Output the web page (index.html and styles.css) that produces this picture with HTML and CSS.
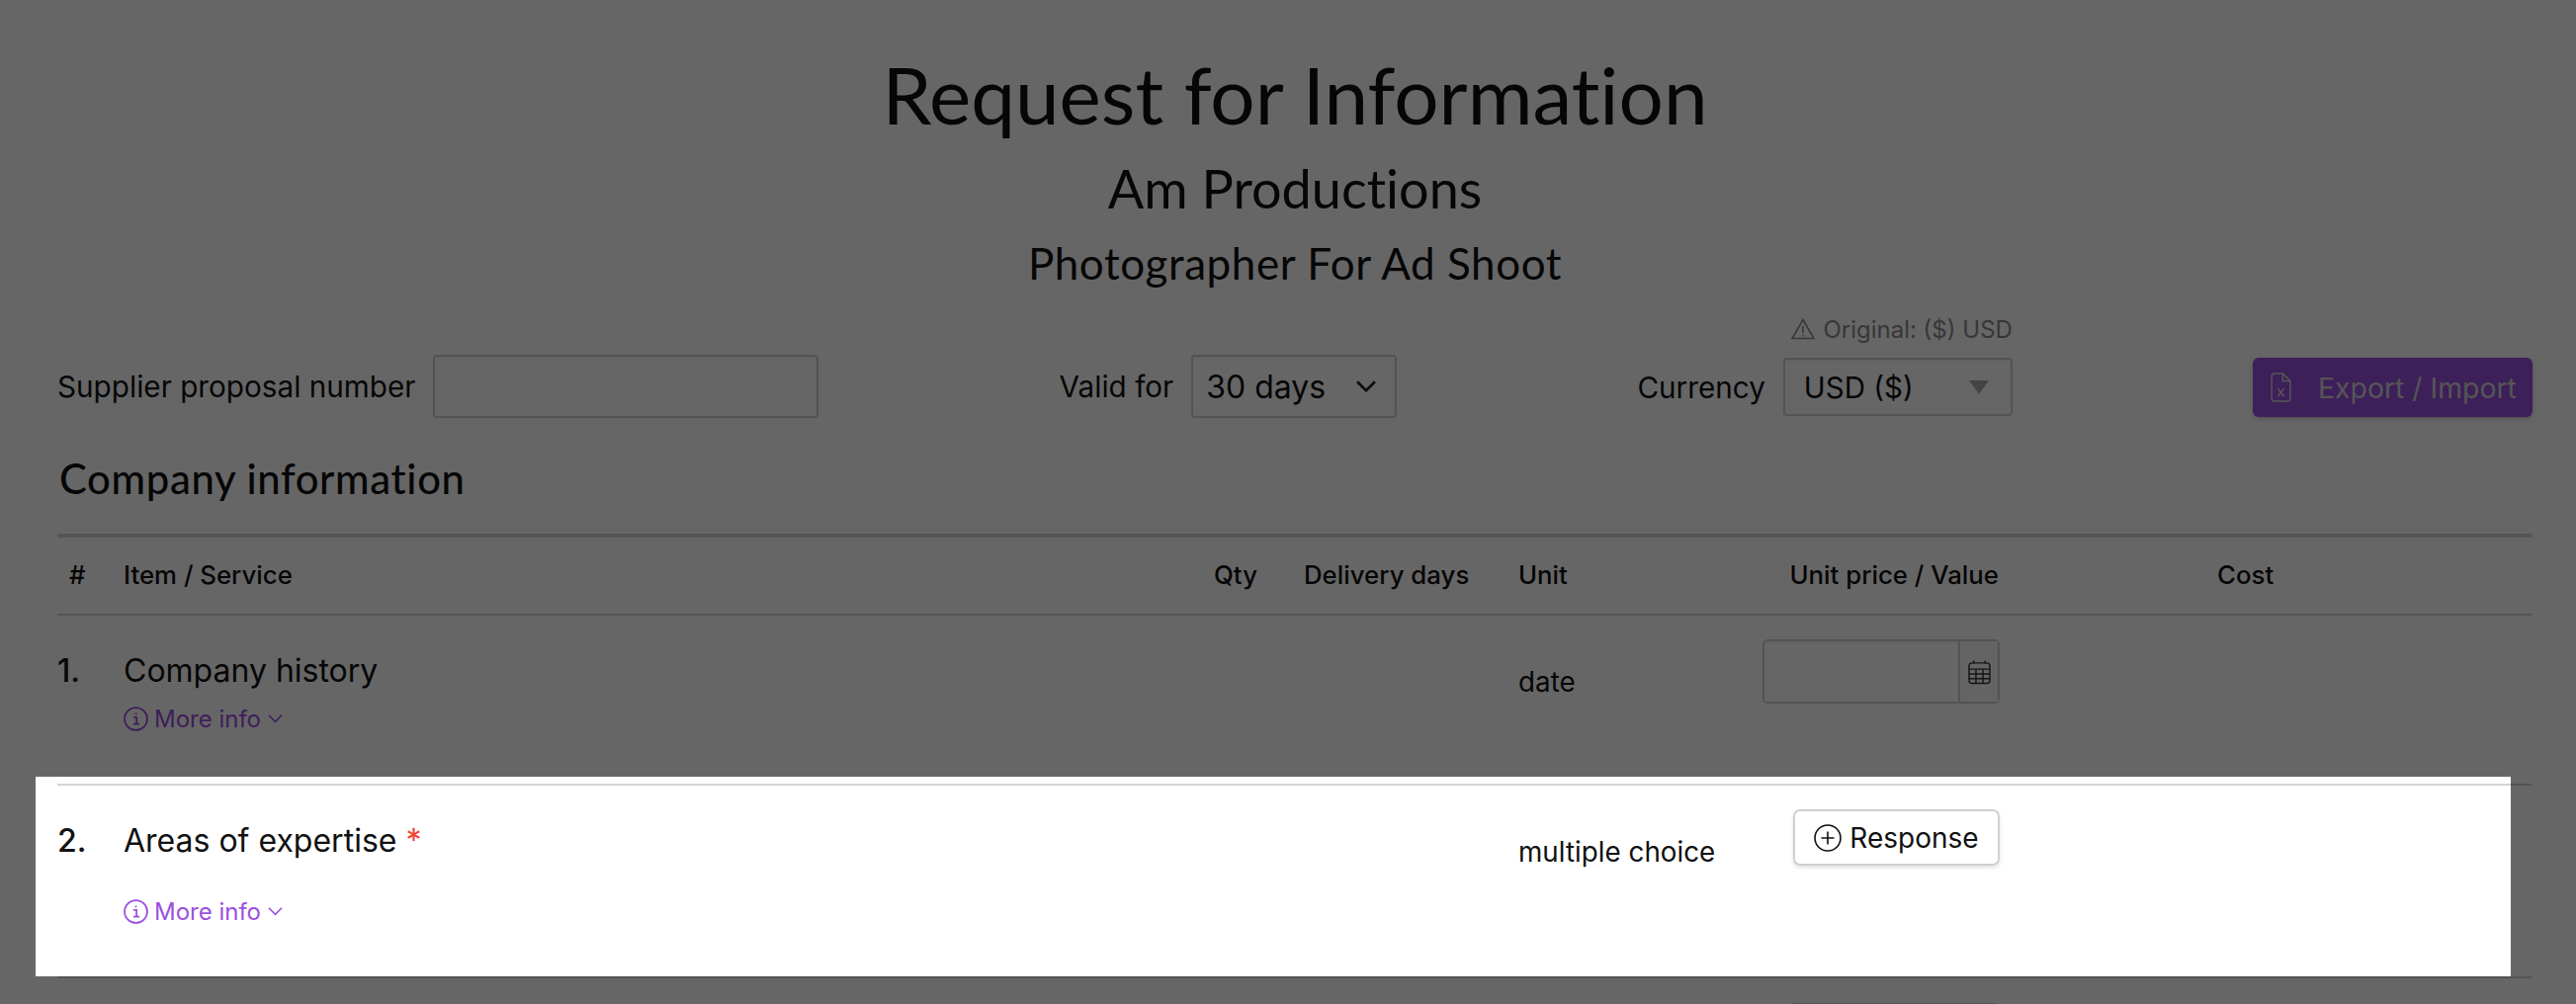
FILE: index.html
```html
<!DOCTYPE html>
<html lang="en">
<head>
<meta charset="utf-8">
<title>Request for Information</title>
<link rel="stylesheet" href="styles.css">
</head>
<body>
<main class="page">
  <header class="heading">
    <h1>Request for Information</h1>
    <h2>Am Productions</h2>
    <h3>Photographer For Ad Shoot</h3>
  </header>

  <section class="toolbar">
    <div class="field">
      <label for="proposal">Supplier proposal number</label>
      <input id="proposal" class="text-input" type="text">
    </div>
    <div class="field">
      <span class="label">Valid for</span>
      <div class="select select-valid">
        <span>30 days</span>
        <svg class="chevron" viewBox="0 0 16 10"><path d="M1.5 1.5 8 8l6.5-6.5"/></svg>
      </div>
    </div>
    <div class="currency">
      <div class="note">
        <svg class="warn" viewBox="0 0 24 22"><path d="M12 1.5 1 20.5h22z"/><path d="M12 8v7M12 17v1.400"/></svg>
        <span>Original: ($) USD</span>
      </div>
      <div class="field">
        <span class="label">Currency</span>
        <div class="select select-currency">
          <span>USD ($)</span>
          <i class="caret"></i>
        </div>
      </div>
    </div>
    <button class="export" type="button">
      <svg class="file" viewBox="0 0 22 32"><path d="M4 1h9l8 8v19a3 3 0 0 1-3 3H4a3 3 0 0 1-3-3V4a3 3 0 0 1 3-3z"/><path d="M13 1v8h8M7.500 17l7 9M14.500 17l-7 9"/></svg>
      <span>Export / Import</span>
    </button>
  </section>

  <h4 class="section-title">Company information</h4>

  <section class="table">
    <div class="row head">
      <div class="hash">#</div>
      <div>Item / Service</div>
      <div>Qty</div>
      <div>Delivery days</div>
      <div>Unit</div>
      <div class="right">Unit price / Value</div>
      <div class="cost">Cost</div>
    </div>

    <div class="row item">
      <div class="num">1.</div>
      <div class="item-name">
        <div class="name">Company history</div>
        <a class="more">
          <svg class="info" viewBox="0 0 24 24"><circle cx="12" cy="12" r="11"/><path d="M9.500 10.500H12.600V17M9.500 17h6M12 6.200v1.800"/></svg>
          <span>More info</span>
          <svg class="mini-chevron" viewBox="0 0 16 10"><path d="M1 1.500 8 8.500l7-7"/></svg>
        </a>
      </div>
      <div></div>
      <div></div>
      <div class="unit">date</div>
      <div class="value">
        <div class="date">
          <span class="date-input"></span>
          <span class="date-addon">
            <svg class="calendar" viewBox="0 0 24 26"><rect x="1" y="3.500" width="22" height="21.500" rx="3.500"/><path d="M6 1v3M18 1v3M1 10h22M1 15h22M1 20h22M8.300 10v15M15.700 10v15"/></svg>
          </span>
        </div>
      </div>
      <div></div>
    </div>

    <div class="row item item-second">
      <div class="num">2.</div>
      <div class="item-name">
        <div class="name">Areas of expertise <em>*</em></div>
        <a class="more more-low">
          <svg class="info" viewBox="0 0 24 24"><circle cx="12" cy="12" r="11"/><path d="M9.500 10.500H12.600V17M9.500 17h6M12 6.200v1.800"/></svg>
          <span>More info</span>
          <svg class="mini-chevron" viewBox="0 0 16 10"><path d="M1 1.500 8 8.500l7-7"/></svg>
        </a>
      </div>
      <div></div>
      <div></div>
      <div class="unit">multiple choice</div>
      <div class="value">
        <button class="response" type="button">
          <svg class="plus" viewBox="0 0 28 28"><circle cx="14" cy="14" r="13"/><path d="M14 7.500v13M7.500 14h13"/></svg>
          <span>Response</span>
        </button>
      </div>
      <div></div>
    </div>

    <div class="row item-cut">
      <div></div>
      <div></div>
      <div></div>
      <div></div>
      <div></div>
      <div class="value-cut"><div class="next-field"></div></div>
      <div></div>
    </div>
  </section>
</main>
<div class="spotlight"></div>
</body>
</html>
```

FILE: styles.css
```css
* { box-sizing: border-box; }
html, body { margin: 0; height: 1016px; overflow: hidden; background: #fff; }
body { position: relative; font-family: Inter, "Liberation Sans", sans-serif; color: #111; }

.page { height: 1016px; padding: 47px 44px 0 58px; overflow: hidden; }

.heading { text-align: center; font-family: Lato, "Noto Sans", sans-serif; font-variant-ligatures: none; }
.heading h1, .heading h2, .heading h3 { margin: 0; font-weight: 400; }
.heading h1 { font-size: 80px; line-height: 97px; }
.heading h2 { font-size: 54px; line-height: 64px; margin-top: 15px; }
.heading h3 { font-size: 44px; line-height: 52px; margin-top: 17px; letter-spacing: .55px; }

.toolbar { display: flex; justify-content: space-between; align-items: flex-end; margin-top: 26px; }
.field { display: flex; align-items: center; gap: 18px; font-size: 29.700px; }
.label, label { white-space: nowrap; }

.text-input, .select {
  height: 64px; border: 2px solid #d0d0d0; border-radius: 4px; background: #fff;
  box-shadow: inset 0 2px 2px rgba(0,0,0,.04);
}
.text-input { width: 390px; padding: 0 12px; font: inherit; }

.select { display: flex; align-items: center; justify-content: space-between; font-size: 32px; }
.select-valid { width: 208px; padding: 0 18px 0 13px; }
.select-currency { width: 232px; height: 59px; padding: 0 22px 0 19px; font-size: 29.500px; }
.chevron { width: 22px; height: 14px; fill: none; stroke: #222; stroke-width: 2; }
.caret { width: 0; height: 0; border-left: 10px solid transparent; border-right: 10px solid transparent; border-top: 14px solid #aaa; }

.currency { display: flex; flex-direction: column; align-items: flex-end; gap: 14px; padding-bottom: 2px; }
.note { display: flex; align-items: center; gap: 8px; height: 30px; font-size: 24px; color: #8a8a8a; }
.warn { width: 24px; height: 22px; fill: none; stroke: #8a8a8a; stroke-width: 1.600; }

.export {
  display: flex; align-items: center; gap: 27px; width: 283px; height: 60px; margin-bottom: 1px; padding: 0 18px;
  border: 0; border-radius: 6px; background: #9a4fdf; color: #d5d5d5; font: 28.400px Inter, sans-serif;
  box-shadow: 0 2px 5px rgba(0,0,0,.2); white-space: nowrap;
}
.file { width: 21px; height: 30px; fill: none; stroke: #d5d5d5; stroke-width: 1.600; flex: none; }

.section-title {
  margin: 37px 0 32px 2px; font: 500 41.800px/48px Lato, "Noto Sans", sans-serif;
  font-variant-ligatures: none; letter-spacing: .65px;
}

.table { border-top: 4px solid #d4d4d4; }
.row { display: grid; grid-template-columns: 67px 1103px 91px 217px 250px 236px 1fr; border-bottom: 2px solid #d4d4d4; }
.head { height: 79px; align-items: center; padding-bottom: 3px; font-size: 25.800px; font-weight: 500; }
.hash { padding-left: 12px; }
.right { text-align: right; }
.cost { padding-left: 221px; }

.item { height: 172px; font-size: 32px; }
.item-second { height: 195px; }
.num { padding-top: 36px; line-height: 40px; font-weight: 500; }
.item-name { padding-top: 36px; }
.name { line-height: 40px; }
.name em { font-style: normal; color: #f44336; }
.more { display: flex; align-items: center; gap: 6px; height: 36px; margin-top: 10px; font-size: 24px; color: #9b4fe0; }
.more-low { margin-top: 33px; }
.info { width: 25px; height: 25px; fill: none; stroke: #9b4fe0; stroke-width: 1.700; }
.mini-chevron { width: 15px; height: 10px; margin-left: 1px; fill: none; stroke: #9b4fe0; stroke-width: 1.700; }

.unit { padding-top: 47px; line-height: 40px; font-size: 27.800px; }
.value { padding-top: 24px; display: flex; justify-content: flex-end; }

.date { display: flex; flex: none; width: 240px; height: 65px; border: 2px solid #d0d0d0; border-radius: 5px; margin-right: -1px; }
.date-input { flex: 1; box-shadow: inset 0 2px 2px rgba(0,0,0,.04); }
.date-addon { display: flex; align-items: center; justify-content: center; width: 40px; border-left: 2px solid #d0d0d0; background: #fafafa; }
.calendar { width: 23px; height: 26px; fill: none; stroke: #333; stroke-width: 1.500; }

.response {
  display: flex; align-items: center; justify-content: center; gap: 8px; flex: none; width: 209px; height: 57px; margin-right: -1px;
  border: 2px solid #d0d0d0; border-radius: 7px; background: #fff; color: #111; font: 28px Inter, sans-serif;
  box-shadow: 0 2px 4px rgba(0,0,0,.12);
}
.plus { width: 28px; height: 28px; fill: none; stroke: #111; stroke-width: 1.600; }

.item-cut { height: 26px; border-bottom: 0; overflow: hidden; }
.value-cut { display: flex; justify-content: flex-end; padding-top: 25px; }
.next-field { flex: none; width: 212px; height: 60px; border: 2px solid #d4d4d4; border-radius: 5px; }

.spotlight {
  position: absolute; left: 36px; top: 786px; width: 2504px; height: 202px;
  box-shadow: 0 0 0 3000px rgba(0,0,0,.6);
}
```
